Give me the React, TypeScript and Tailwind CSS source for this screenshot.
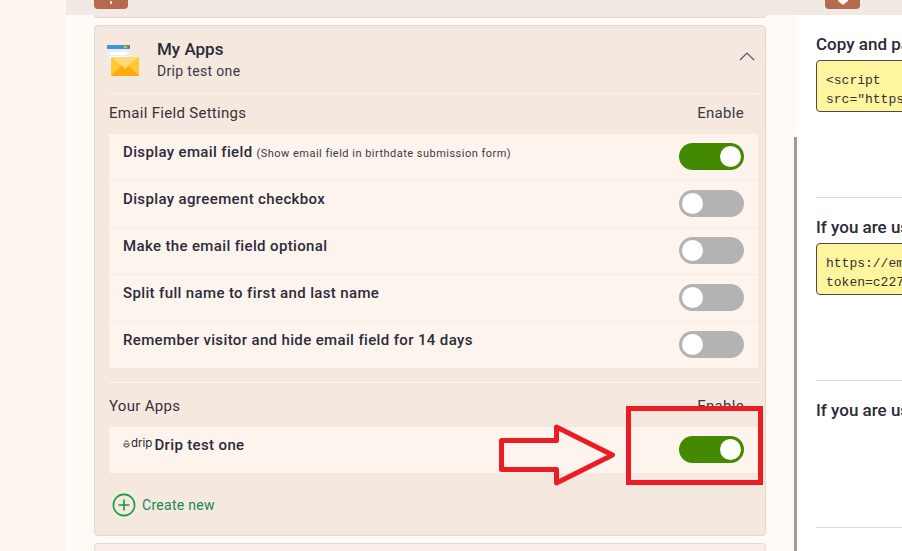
// App.tsx
const font = { fontFamily: "Roboto, sans-serif" };

// ================== TOGGLE
const Toggle = ({ on }: { on?: boolean }) => (
  <div
    className={`flex h-[27px] w-[65px] shrink-0 items-center rounded-full px-[3px] ${
      on ? "justify-end bg-[#438a00]" : "justify-start bg-[#b5b3b1]"
    }`}
  >
    <div className="h-[21px] w-[21px] rounded-full bg-white" />
  </div>
);

// ================== SETTING ROW
const SettingRow = ({
  label,
  note,
  on,
  last,
}: {
  label: string;
  note?: string;
  on?: boolean;
  last?: boolean;
}) => (
  <div
    className={`flex items-start justify-between pl-[14px] pr-[14px] pt-[9px] ${
      last ? "h-[46px]" : "h-[47px] border-b border-[#f6ece5]"
    }`}
  >
    <div className="text-[15px] leading-[18px] font-medium tracking-[0.36px] text-[#2c2c3a]">
      {label}
      {note && <span className="ml-[4px] text-[11px] font-normal tracking-[0.48px] text-[#3a3a48]">{note}</span>}
    </div>
    <Toggle on={on} />
  </div>
);

// ================== MAIL ICON
const MailIcon = () => (
  <svg width="32" height="31" viewBox="0 0 32 31" className="shrink-0">
    <rect x="0" y="0" width="23" height="22" fill="#e9eef2" />
    <rect x="0" y="0" width="23" height="4" fill="#3f95d6" />
    <rect x="17" y="1" width="2" height="2" fill="#f4c430" />
    <rect x="19" y="1" width="2" height="2" fill="#7cb342" />
    <rect x="21" y="1" width="2" height="2" fill="#d9534f" />
    <rect x="3" y="7" width="17" height="3" fill="#ffffff" />
    <rect x="3" y="11" width="17" height="3" fill="#ffffff" />
    <polygon points="4,12 32,12 32,31 4,31" fill="#ffc933" />
    <polygon points="4,12 32,12 18,23" fill="#ffd97a" />
    <polygon points="4,31 14,21 18,24 22,21 32,31" fill="#ffa90a" />
  </svg>
);

// ================== DRIP LOGO
const DripLogo = () => (
  <span className="-mt-[1px] flex items-center">
    <svg width="7" height="9" viewBox="0 0 7 9" fill="none" stroke="#2a2a2a" strokeWidth="1">
      <path d="M1.5 3A2.5 2.5 0 0 1 5.5 3M.5 5h6M.8 6a2.8 2.8 0 0 0 5.4 0" />
    </svg>
    <span className="ml-[1px] text-[11.5px] leading-[16px] text-[#2a2a2a]" style={{ fontFamily: "Inter, sans-serif" }}>
      drip
    </span>
  </span>
);

// ================== CODE BOX
const CodeBox = ({ lines }: { lines: string[] }) => (
  <div
    className="h-[52px] w-[200px] rounded-[4px] border border-[#4a4a4a] bg-[#fff59f] pl-[9px] pt-[10px] text-[13px] leading-[19px] whitespace-nowrap text-[#333]"
    style={{ fontFamily: "'Liberation Mono', monospace" }}
  >
    {lines.map((l) => (
      <div key={l}>{l}</div>
    ))}
  </div>
);

// ================== APP
export default function App() {
  return (
    <div className="relative flex h-[551px] w-[902px] overflow-hidden bg-white" style={font}>
      {/* left gutter */}
      <div className="w-[66px] shrink-0 bg-[#fef5ef]" />

      {/* main column */}
      <div className="flex w-[731px] shrink-0 flex-col bg-[#fffaf6]">
        <div className="h-[15px] shrink-0 bg-[#f1e9e3]">
          <div className="ml-[28px] flex h-[9px] w-[34px] justify-center rounded-b-[4px] bg-[#b5694d] pt-[1px]">
            <div className="h-[3px] w-[2px] bg-[#f4e8df]" />
          </div>
        </div>
        <div className="ml-[28px] h-[3px] w-[672px] shrink-0 rounded-b-[4px] border-x border-b border-[#e8d8cb] bg-[#f4e8df]" />

        {/* my apps card */}
        <div className="mt-[7px] ml-[28px] flex h-[511px] w-[672px] shrink-0 flex-col rounded-[4px] border border-[#e8d8cb] bg-[#f4e8df] pr-[7px] pl-[14px]">
          <div className="flex h-[68px] shrink-0 items-start border-b border-[#fdf7f2]">
            <div className="mt-[19px] -ml-[2px]">
              <MailIcon />
            </div>
            <div className="ml-[18px] pt-[13px]">
              <div className="text-[17px] leading-[20px] font-medium text-[#2a2a38]">My Apps</div>
              <div className="mt-[3px] text-[14px] leading-[18px] tracking-[0.33px] text-[#3a3a48]">Drip test one</div>
            </div>
            <svg width="16" height="10" viewBox="0 0 16 10" className="mt-[25px] ml-auto mr-[3px]" fill="none" stroke="#55556a" strokeWidth="1.2">
              <path d="M1 9 8 2l7 7" />
            </svg>
          </div>

          <div className="flex h-[38px] shrink-0 items-center justify-between pr-[14px] mb-[2px]">
            <span className="text-[15px] tracking-[0.3px] text-[#3a3038]">Email Field Settings</span>
            <span className="text-[15px] tracking-[0.3px] text-[#3a3a48]">Enable</span>
          </div>

          <div className="shrink-0 bg-[#fdf4ee]">
            <SettingRow label="Display email field" note="(Show email field in birthdate submission form)" on />
            <SettingRow label="Display agreement checkbox" />
            <SettingRow label="Make the email field optional" />
            <SettingRow label="Split full name to first and last name" />
            <SettingRow label="Remember visitor and hide email field for 14 days" last />
          </div>

          <div className="mt-[14px] flex h-[45px] shrink-0 items-center justify-between border-t border-[#fdf7f2] pt-[2px] pr-[14px]">
            <span className="text-[15px] tracking-[0.3px] text-[#3a3038]">Your Apps</span>
            <span className="text-[15px] tracking-[0.3px] text-[#3a3a48]">Enable</span>
          </div>

          <div className="flex h-[46px] shrink-0 items-start justify-between bg-[#fdf4ee] pr-[14px] pl-[14px] pt-[9px]">
            <div className="flex items-start">
              <DripLogo />
              <span className="ml-[2px] text-[15px] leading-[18px] font-medium tracking-[0.36px] text-[#2c2c3a]">Drip test one</span>
            </div>
            <Toggle on />
          </div>

          <div className="mt-[20px] flex items-center pl-[3px]">
            <svg width="24" height="24" viewBox="0 0 24 24" fill="none" stroke="#0f9d3f" strokeWidth="1.6">
              <circle cx="12" cy="12" r="10.6" />
              <path d="M12 6.5v11M6.5 12h11" />
            </svg>
            <span className="ml-[6px] text-[14px] tracking-[0.3px] text-[#16894f]">Create new</span>
          </div>
        </div>

        <div className="mt-[7px] ml-[28px] h-[20px] w-[672px] shrink-0 rounded-t-[4px] border border-[#e8d8cb] bg-[#f9efe8]" />
      </div>

      {/* right panel */}
      <div className="flex min-w-0 flex-1 flex-col overflow-hidden">
        <div className="h-[15px] shrink-0 bg-[#f1e9e3] pl-[28px]">
          <div className="flex h-[9px] w-[35px] justify-center rounded-b-[4px] bg-[#b5694d]">
            <svg width="10" height="5" viewBox="0 0 10 5" fill="#fdf4ee">
              <path d="M0 0h10v1L5 5 0 1z" />
            </svg>
          </div>
        </div>
        <div className="flex flex-col pl-[19px]">
          <div className="mt-[20px] h-[18px] text-[17px] leading-[18px] font-medium whitespace-nowrap text-[#2a2a38]">Copy and paste</div>
          <div className="mt-[7px]">
            <CodeBox lines={["<script", 'src="https://embed']} />
          </div>
          <div className="mt-[85px] h-px w-[200px] bg-[#dddddd]" />
          <div className="mt-[20px] h-[18px] text-[17px] leading-[18px] font-medium whitespace-nowrap text-[#2a2a38]">If you are using</div>
          <div className="mt-[7px]">
            <CodeBox lines={["https://embed", "token=c2271abc"]} />
          </div>
          <div className="mt-[85px] h-px w-[200px] bg-[#dddddd]" />
          <div className="mt-[20px] h-[18px] text-[17px] leading-[18px] font-medium whitespace-nowrap text-[#2a2a38]">If you are using</div>
          <div className="mt-[108px] h-px w-[200px] bg-[#dddddd]" />
        </div>
      </div>

      {/* scrollbar thumb */}
      <div className="absolute top-[137px] left-[794px] h-[414px] w-[3px] bg-[#a89a92]" />

      {/* annotation */}
      <div className="absolute top-[406px] left-[626px] h-[79px] w-[137px] border-[5px] border-[#ed1c24]" />
      <svg className="absolute top-[422px] left-[497px]" width="122" height="66" viewBox="0 0 122 66" fill="none" stroke="#ed1c24" strokeWidth="5" strokeLinejoin="round">
        <path d="M4.5 18.5h55V5l56 28-56 28V47.5h-55z" />
      </svg>
    </div>
  );
}
